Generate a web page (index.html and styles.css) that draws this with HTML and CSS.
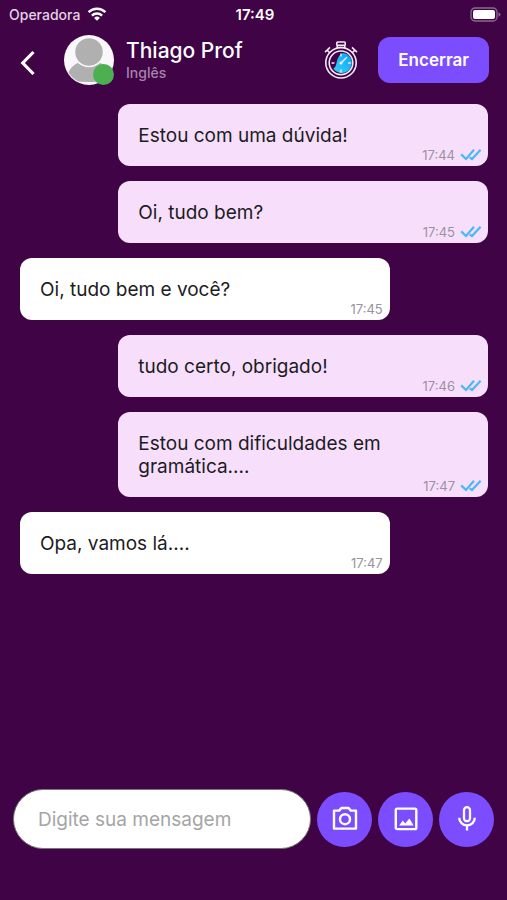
FILE: index.html
```html
<!DOCTYPE html>
<html lang="pt-BR">
<head>
<meta charset="utf-8">
<meta name="viewport" content="width=device-width, initial-scale=1">
<title>Thiago Prof</title>
<link rel="stylesheet" href="styles.css">
</head>
<body>
<svg class="defs" aria-hidden="true">
  <symbol id="checks" viewBox="0 0 22 12">
    <path d="M1.2 5.4 6 10 14 .8M9.6 8.4 12 10 20.6 .8" fill="none" stroke="currentColor" stroke-width="2.2"/>
  </symbol>
</svg>
<div class="app">
  <div class="status">
    <div class="carrier">
      <span>Operadora</span>
      <svg class="wifi" viewBox="0 0 20 14" aria-hidden="true">
        <g fill="none" stroke="currentColor" stroke-width="2.5">
          <path d="M1.6 5.2a12 12 0 0 1 16.8 0"/>
          <path d="M4.9 8.6a7.3 7.3 0 0 1 10.2 0"/>
        </g>
        <path d="M10 13.8 7.1 10.9a4.1 4.1 0 0 1 5.8 0z" fill="currentColor"/>
      </svg>
    </div>
    <time class="clock">17:49</time>
    <svg class="battery" viewBox="0 0 31 15" aria-hidden="true">
      <rect x="1" y="1" width="26" height="13" rx="4" fill="none" stroke="#8c6a90" stroke-width="1.3"/>
      <rect x="3" y="3" width="22" height="9" rx="2" fill="#fff"/>
      <path d="M28.5 5.2q2 .7 2 2.3t-2 2.3z" fill="#8c6a90"/>
    </svg>
  </div>

  <header class="header">
    <button class="back" type="button" aria-label="Voltar">
      <svg viewBox="0 0 16 26" aria-hidden="true"><path d="M13.5 2 2.8 13 13.5 24" fill="none" stroke="currentColor" stroke-width="3.2"/></svg>
    </button>
    <div class="avatar">
      <svg viewBox="0 0 50 50" aria-hidden="true">
        <defs><clipPath id="disc"><circle cx="25" cy="25" r="24"/></clipPath></defs>
        <circle cx="25" cy="25" r="25" fill="#f9f7fa"/>
        <g clip-path="url(#disc)" fill="#b1b0b1">
          <path d="M4 46V38C7 32 11 29 14 28Q25 36 36 28C41 30 45 34 47 39V46Q25 48 4 46z"/>
          <circle cx="25" cy="17" r="14.5" stroke="#f9f7fa" stroke-width="1.5"/>
        </g>
      </svg>
      <span class="online"></span>
    </div>
    <div class="person">
      <h1 class="name">Thiago Prof</h1>
      <p class="subject">Inglês</p>
    </div>
    <svg class="timer" viewBox="0 0 34 38" aria-hidden="true">
      <defs><linearGradient id="dial" x1="0" x2="1" y1="1" y2="0"><stop offset="0" stop-color="#3fd0f5"/><stop offset="1" stop-color="#00a4f8"/></linearGradient></defs>
      <g fill="none" stroke="#f3e8f6" stroke-width="1.6">
        <rect x="12.8" y="1" width="8.4" height="3.4" rx=".8"/>
        <circle cx="17" cy="21.8" r="15.2"/>
        <circle cx="17" cy="21.8" r="11.8"/>
        <path d="M13.2 7V4.6M20.8 7V4.6M1 11.2 6 6.4M2.6 8.6 6 12M33 11.2 28 6.4M31.4 8.6 28 12"/>
      </g>
      <path d="M9.4 27.4C14 26 11 15.5 19 12A10 10 0 1 1 9.4 27.4z" fill="url(#dial)"/>
      <g stroke="#f3e8f6" stroke-width="1.4" stroke-linecap="round">
        <path d="M17 13v2M17 29v2M8 22h2M24.5 22h2M17 22 22.6 16.4"/>
      </g>
      <circle cx="17" cy="22" r="1.6" fill="#f3e8f6"/>
    </svg>
    <button class="end" type="button">Encerrar</button>
  </header>

  <main class="chat">
    <article class="msg sent"><p>Estou com uma dúvida!</p><div class="meta"><time>17:44</time><svg class="checks" role="img" aria-label="Lida"><use href="#checks"/></svg></div></article>
    <article class="msg sent"><p>Oi, tudo bem?</p><div class="meta"><time>17:45</time><svg class="checks" role="img" aria-label="Lida"><use href="#checks"/></svg></div></article>
    <article class="msg"><p>Oi, tudo bem e você?</p><div class="meta"><time>17:45</time></div></article>
    <article class="msg sent"><p>tudo certo, obrigado!</p><div class="meta"><time>17:46</time><svg class="checks" role="img" aria-label="Lida"><use href="#checks"/></svg></div></article>
    <article class="msg sent"><p>Estou com dificuldades em gramática....</p><div class="meta"><time>17:47</time><svg class="checks" role="img" aria-label="Lida"><use href="#checks"/></svg></div></article>
    <article class="msg"><p>Opa, vamos lá....</p><div class="meta"><time>17:47</time></div></article>
  </main>

  <form class="composer">
    <input class="field" type="text" placeholder="Digite sua mensagem" aria-label="Digite sua mensagem">
    <button class="round" type="button" aria-label="Câmera">
      <svg viewBox="0 0 28 28" aria-hidden="true"><g fill="none" stroke="currentColor" stroke-width="2.4" stroke-linejoin="round"><path d="M3 5.6h5.2L10.4 3h7.2l2.2 2.6H25v18H3z"/><circle cx="14" cy="14.2" r="5"/></g></svg>
    </button>
    <button class="round" type="button" aria-label="Imagem">
      <svg viewBox="0 0 28 28" aria-hidden="true"><rect x="3.8" y="3.6" width="20.5" height="20.5" rx="1.4" fill="none" stroke="currentColor" stroke-width="2.4"/><path d="M7.2 20.4 10.8 15.6l2.4 3 4.2-5.2 4.2 7z" fill="currentColor"/></svg>
    </button>
    <button class="round" type="button" aria-label="Gravar áudio">
      <svg viewBox="0 0 28 28" aria-hidden="true"><g fill="none" stroke="currentColor" stroke-width="2.3"><rect x="11" y="2.2" width="6" height="14" rx="3"/><path d="M6.2 12.8a7.8 7.6 0 0 0 15.6 0M14 20.4v5"/></g></svg>
    </button>
  </form>
</div>
</body>
</html>
```

FILE: styles.css
```css
* { box-sizing: border-box; }

body {
  margin: 0;
  background: #400345;
  color: #fff;
  font-family: Inter, "Liberation Sans", sans-serif;
}

h1, p { margin: 0; }

button {
  border: 0;
  padding: 0;
  background: none;
  color: inherit;
  font: inherit;
  cursor: pointer;
}

svg { display: block; }

.defs { position: absolute; width: 0; height: 0; }

.app {
  display: flex;
  flex-direction: column;
  min-height: 100vh;
}

.status {
  display: grid;
  grid-template-columns: 1fr auto 1fr;
  align-items: center;
  height: 28px;
  padding: 0 6px 0 9px;
}

.carrier {
  display: flex;
  align-items: center;
  gap: 7px;
  color: #e0d3e2;
  font-size: 14px;
  font-weight: 500;
}

.wifi { width: 20px; height: 14px; color: #fff; }
.clock { font-size: 15px; font-weight: 600; }
.battery { width: 31px; height: 15px; justify-self: end; }

.header {
  display: flex;
  align-items: center;
  height: 64px;
  padding: 0 18px 0 20px;
}

.back { margin-right: 28px; padding-top: 5px; }
.back svg { width: 16px; height: 26px; }

.avatar { position: relative; width: 50px; height: 50px; }
.avatar svg { width: 100%; height: 100%; }

.online {
  position: absolute;
  right: 0;
  bottom: 0;
  width: 21px;
  height: 21px;
  border-radius: 50%;
  background: #4caf50;
}

.person { flex: 1; margin-left: 12px; }
.name { font-size: 21px; line-height: 26px; font-weight: 500; }
.subject { font-size: 14px; line-height: 18px; font-weight: 500; color: #a584ab; }

.timer { width: 34px; height: 38px; margin-right: 20px; }

.end {
  padding: 0 20px;
  height: 46px;
  border-radius: 12px;
  background: #7c4dff;
  font-size: 17px;
  font-weight: 600;
}

.chat {
  flex: 1;
  display: flex;
  flex-direction: column;
  gap: 15px;
  padding: 12px 19px 12px 20px;
}

.msg {
  width: 79%;
  padding: 20px 7px 4px 20px;
  border-radius: 12px;
  background: #fff;
  color: #1c1c1e;
}

.msg p { padding-right: 13px; font-size: 19px; line-height: 23px; }

.sent { align-self: flex-end; padding-right: 6px; background: #f7dffc; }
.sent p { padding-right: 60px; }

.meta {
  display: flex;
  justify-content: flex-end;
  align-items: center;
  gap: 5px;
  height: 14px;
  margin-top: 1px;
  font-size: 13px;
  color: #9c919e;
}

.checks { width: 22px; height: 12px; color: #4ab8f8; }

.composer {
  display: flex;
  align-items: center;
  gap: 6px;
  padding: 0 13px 51px;
}

.field {
  flex: 1;
  min-width: 0;
  height: 60px;
  padding: 0 24px;
  border: 1px solid #777;
  border-radius: 30px;
  background: #fff;
  color: #1c1c1e;
  font: inherit;
  font-size: 19px;
}

.field::placeholder { color: #a5a5a5; opacity: 1; }

.round {
  display: grid;
  place-items: center;
  width: 55px;
  height: 55px;
  border-radius: 50%;
  background: #7c4dff;
}

.round svg { width: 28px; height: 28px; }
```
